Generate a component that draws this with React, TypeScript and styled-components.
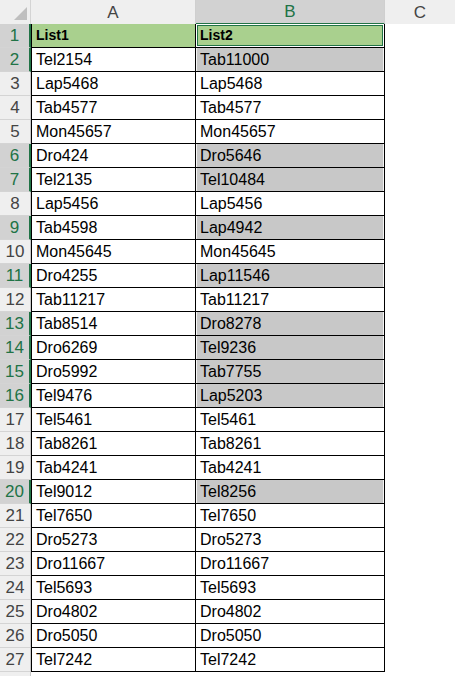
import styled, { createGlobalStyle } from 'styled-components';

const GlobalStyle = createGlobalStyle`
  html, body {
    margin: 0;
    padding: 0;
    background: #ffffff;
    overflow: hidden;
  }
  body {
    font-family: "Liberation Sans", Arial, sans-serif;
  }
`;

const listA = [
  'Tel2154', 'Lap5468', 'Tab4577', 'Mon45657', 'Dro424', 'Tel2135', 'Lap5456',
  'Tab4598', 'Mon45645', 'Dro4255', 'Tab11217', 'Tab8514', 'Dro6269', 'Dro5992',
  'Tel9476', 'Tel5461', 'Tab8261', 'Tab4241', 'Tel9012', 'Tel7650', 'Dro5273',
  'Dro11667', 'Tel5693', 'Dro4802', 'Dro5050', 'Tel7242',
];

const listB = [
  'Tab11000', 'Lap5468', 'Tab4577', 'Mon45657', 'Dro5646', 'Tel10484', 'Lap5456',
  'Lap4942', 'Mon45645', 'Lap11546', 'Tab11217', 'Dro8278', 'Tel9236', 'Tab7755',
  'Lap5203', 'Tel5461', 'Tab8261', 'Tab4241', 'Tel8256', 'Tel7650', 'Dro5273',
  'Dro11667', 'Tel5693', 'Dro4802', 'Dro5050', 'Tel7242',
];

const GREEN = '#217346';

function App() {
  return (
    <>
      <GlobalStyle />
      <Sheet>
        <HeaderRow>
          <Corner>
            <svg width="31" height="23" viewBox="0 0 31 23">
              <polygon points="14,20 27,20 27,7" fill="#bfbfbf" />
            </svg>
          </Corner>
          <ColHeader>A</ColHeader>
          <ColHeader $selected>B</ColHeader>
          <ColHeader $last>C</ColHeader>
        </HeaderRow>

        <Row>
          <RowHeader $selected>1</RowHeader>
          <Cell $col="a" $fill="green" $bold>List1</Cell>
          <Cell $col="b" $fill="green" $bold $active>List2</Cell>
          <Blank />
        </Row>

        {listA.map((a, i) => {
          const b = listB[i];
          const diff = a !== b;
          return (
            <Row key={i}>
              <RowHeader $selected={diff}>{i + 2}</RowHeader>
              <Cell $col="a">{a}</Cell>
              <Cell $col="b" $fill={diff ? 'grey' : 'none'}>{b}</Cell>
              <Blank />
            </Row>
          );
        })}

        {/* row 28 only peeks in at the bottom edge */}
        <Row>
          <RowHeader />
          <Blank />
          <Blank />
          <Blank />
        </Row>
      </Sheet>
    </>
  );
}

const Sheet = styled.div`
  width: 455px;
  display: flex;
  flex-direction: column;
  color: #000;
  font-size: 16px;
`;

const HeaderRow = styled.div`
  display: grid;
  grid-template-columns: 31px 165px 189px 1fr;
  height: 24px;
`;

const Corner = styled.div`
  background: #efefef;
  border-bottom: 1px solid #ababab;
  border-right: 1px solid #d4d4d4;
  svg {
    display: block;
  }
`;

const ColHeader = styled.div<{ $selected?: boolean; $last?: boolean }>`
  box-sizing: border-box;
  background: ${(p) => (p.$selected ? '#d2d2d2' : '#efefef')};
  color: ${(p) => (p.$selected ? GREEN : '#444444')};
  border-right: ${(p) => (p.$last ? 'none' : '1px solid #cfcfcf')};
  border-bottom: ${(p) => (p.$selected ? `2px solid ${GREEN}` : '1px solid #ababab')};
  display: flex;
  align-items: center;
  justify-content: center;
  font-size: 17px;
  line-height: 23px;
`;

const Row = styled.div`
  display: grid;
  grid-template-columns: 31px 165px 189px 1fr;
  height: 24px;
`;

const RowHeader = styled.div<{ $selected?: boolean }>`
  box-sizing: border-box;
  background: ${(p) => (p.$selected ? '#d2d2d2' : '#efefef')};
  color: ${(p) => (p.$selected ? GREEN : '#444444')};
  border-bottom: 1px solid #d4d4d4;
  border-right: ${(p) => (p.$selected ? `2px solid ${GREEN}` : '1px solid #c8c8c8')};
  text-align: center;
  line-height: 23px;
  font-size: 17px;
`;

type Fill = 'none' | 'green' | 'grey';

const fillColor = (f?: Fill) =>
  f === 'green' ? '#a9d08e' : f === 'grey' ? '#c8c8c8' : '#ffffff';

const Cell = styled.div<{ $col: 'a' | 'b'; $fill?: Fill; $bold?: boolean; $active?: boolean }>`
  box-sizing: border-box;
  background: ${(p) => fillColor(p.$fill)};
  border-bottom: 1px solid #000;
  border-right: 1px solid #000;
  border-left: ${(p) => (p.$col === 'a' ? '1px solid #000' : 'none')};
  padding-left: 4px;
  font-weight: ${(p) => (p.$bold ? 700 : 400)};
  font-size: ${(p) => (p.$bold ? '14px' : '16px')};
  line-height: 23px;
  white-space: nowrap;
  overflow: hidden;
  box-shadow: ${(p) =>
    p.$active
      ? `inset 0 0 0 1px #ffffff, inset 0 0 0 2px ${GREEN}`
      : p.$fill === 'grey'
        ? 'inset 1px 0 0 #f4f4f4, inset -1px 0 0 #f4f4f4'
        : 'none'};
`;

const Blank = styled.div`
  background: #ffffff;
`;

export default App;
